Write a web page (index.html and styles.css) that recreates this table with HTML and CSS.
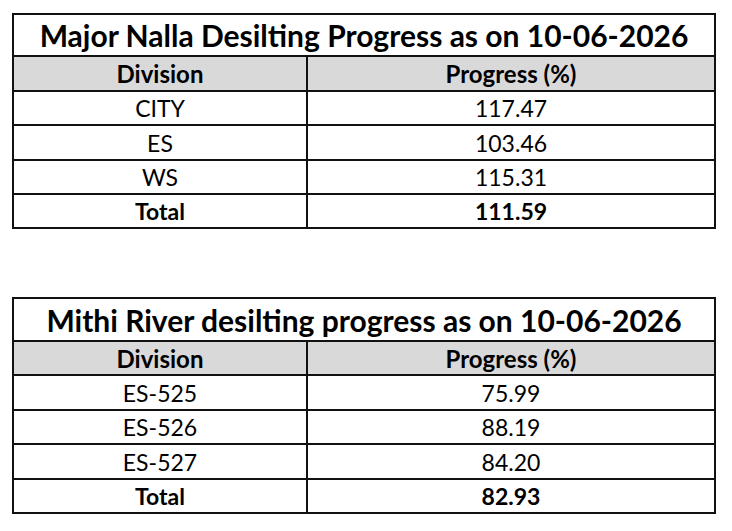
FILE: index.html
```html
<!DOCTYPE html>
<html>
<head>
<meta charset="utf-8">
<link rel="stylesheet" href="styles.css">
</head>
<body>
<div class="page">
  <table class="report">
    <colgroup><col class="col-div"><col class="col-prog"></colgroup>
    <tr class="title-row"><th colspan="2">Major Nalla Desilting Progress as on 10-06-2026</th></tr>
    <tr class="head-row"><th>Division</th><th>Progress (%)</th></tr>
    <tr class="r34"><td>CITY</td><td>117.47</td></tr>
    <tr class="r35"><td>ES</td><td>103.46</td></tr>
    <tr class="r34"><td>WS</td><td>115.31</td></tr>
    <tr class="total r34"><td>Total</td><td>111.59</td></tr>
  </table>
  <table class="report second">
    <colgroup><col class="col-div"><col class="col-prog"></colgroup>
    <tr class="title-row t43"><th colspan="2">Mithi River desilting progress as on 10-06-2026</th></tr>
    <tr class="head-row h34"><th>Division</th><th>Progress (%)</th></tr>
    <tr class="r35"><td>ES-525</td><td>75.99</td></tr>
    <tr class="r34"><td>ES-526</td><td>88.19</td></tr>
    <tr class="r35"><td>ES-527</td><td>84.20</td></tr>
    <tr class="total r34"><td>Total</td><td>82.93</td></tr>
  </table>
</div>
</body>
</html>
```
FILE: styles.css
```css
html, body {
  margin: 0;
  padding: 0;
  background: #ffffff;
}
.page {
  padding: 13px 0 0 12px;
  font-family: Lato, "Liberation Sans", sans-serif;
  color: #000;
}
.report {
  border-collapse: collapse;
  width: 702px;
  table-layout: fixed;
  border: 2px solid #111;
}
.report.second {
  margin-top: 68px;
}
.report th, .report td {
  border: 2px solid #111;
  padding: 0;
  text-align: center;
  vertical-align: middle;
  white-space: nowrap;
}
.col-div {
  width: 294px;
}
.col-prog {
  width: 408px;
}
.title-row {
  height: 42px;
}
.title-row.t43 {
  height: 43px;
}
.title-row th {
  font-size: 30px;
  font-weight: 700;
  background: #fff;
}
.head-row {
  height: 35px;
}
.head-row.h34 {
  height: 34px;
}
.head-row th {
  background: #d9d9d9;
  font-size: 24px;
  font-weight: 700;
}
.report td {
  font-size: 23px;
  font-weight: 400;
}
.r34 { height: 34px; }
.r35 { height: 35px; }
.total td {
  font-weight: 700;
}
```
